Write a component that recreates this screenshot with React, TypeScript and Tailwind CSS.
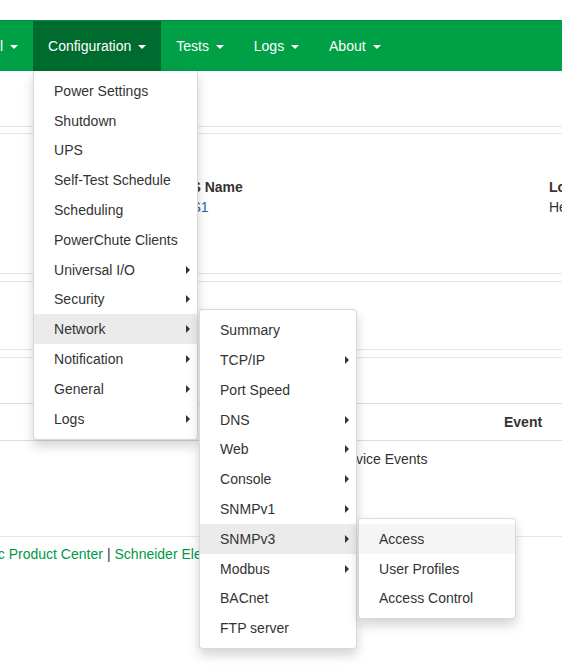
import React from 'react';

type Item = {
  label: string;
  sub?: boolean;
  state?: 'open' | 'hover';
  children?: Item[];
  left?: string;
  top?: string;
};

// Triangle under the nav labels
const Caret = () => (
  <span className="ml-[3px] inline-block h-0 w-0 border-x-[4px] border-t-[4px] border-x-transparent border-t-white align-middle" />
);

// Triangle for items that open a submenu
const SubCaret = () => (
  <span className="inline-block h-0 w-0 border-y-[4px] border-l-[4px] border-y-transparent border-l-[#333]" />
);

const snmpv3: Item[] = [
  { label: 'Access', state: 'hover' },
  { label: 'User Profiles' },
  { label: 'Access Control' },
];

const network: Item[] = [
  { label: 'Summary' },
  { label: 'TCP/IP', sub: true },
  { label: 'Port Speed' },
  { label: 'DNS', sub: true },
  { label: 'Web', sub: true },
  { label: 'Console', sub: true },
  { label: 'SNMPv1', sub: true },
  { label: 'SNMPv3', sub: true, state: 'open', children: snmpv3, left: 'left-[158px]', top: 'top-[-6px]' },
  { label: 'Modbus', sub: true },
  { label: 'BACnet' },
  { label: 'FTP server' },
];

const configuration: Item[] = [
  { label: 'Power Settings' },
  { label: 'Shutdown' },
  { label: 'UPS' },
  { label: 'Self-Test Schedule' },
  { label: 'Scheduling' },
  { label: 'PowerChute Clients' },
  { label: 'Universal I/O', sub: true },
  { label: 'Security', sub: true },
  { label: 'Network', sub: true, state: 'open', children: network, left: 'left-[165px]', top: 'top-[-5px]' },
  { label: 'Notification', sub: true },
  { label: 'General', sub: true },
  { label: 'Logs', sub: true },
];

function MenuItem({ item }: { item: Item }) {
  const bg =
    item.state === 'open' ? 'bg-[#ebebeb]' : item.state === 'hover' ? 'bg-[#f5f5f5]' : 'bg-transparent';
  return (
    <li className={`relative flex h-[29.8px] items-center justify-between pl-[20px] pr-[7px] ${bg}`}>
      <span className="whitespace-nowrap">{item.label}</span>
      {item.sub && <SubCaret />}
      {item.children && (
        <ul
          className={`absolute ${item.left} ${item.top} w-[158px] rounded-[4px] border border-[rgba(0,0,0,0.15)] bg-white py-[5px] shadow-[0_6px_12px_rgba(0,0,0,0.175)]`}
        >
          {item.children.map(c => (
            <MenuItem key={c.label} item={c} />
          ))}
        </ul>
      )}
    </li>
  );
}

const navItems = ['Control', 'Configuration', 'Tests', 'Logs', 'About'];

export default function App() {
  return (
    <div className="relative h-[670px] w-[562px] overflow-hidden bg-white font-['Liberation_Sans',Arial,sans-serif] text-[14px] leading-[20px] text-[#333]">
      <div className="h-[20px]" />

      {/* Top navigation */}
      <nav className="relative z-10 h-[51px] border-t border-[#008f3f] bg-[#00a046]">
        <ul className="-ml-[57px] flex">
          {navItems.map(label => {
            const active = label === 'Configuration';
            return (
              <li
                key={label}
                className={`relative whitespace-nowrap px-[15px] py-[15px] text-white ${active ? 'bg-[#006b2f]' : ''}`}
              >
                {label} <Caret />
                {active && (
                  <ul className="absolute left-0 top-full w-[165px] rounded-b-[4px] border border-t-0 border-[rgba(0,0,0,0.15)] bg-white py-[5px] text-[#333] shadow-[0_6px_12px_rgba(0,0,0,0.175)]">
                    {configuration.map(item => (
                      <MenuItem key={item.label} item={item} />
                    ))}
                  </ul>
                )}
              </li>
            );
          })}
        </ul>
      </nav>

      {/* Page content under the menus */}
      <div className="h-[55px]" />
      <div className="h-[7px] border-t border-[#e6e6e6]" />
      <section className="h-[141px] border-y border-[#e6e6e6] pt-[43px]">
        <div className="flex whitespace-nowrap">
          <div className="w-[549px] shrink-0 pl-[172px]">
            <div className="font-bold">UPS Name</div>
            <div className="text-[#2a64a8]">UPS1</div>
          </div>
          <div>
            <div className="font-bold">Location</div>
            <div>Headquarters</div>
          </div>
        </div>
      </section>
      <div className="h-[7px]" />
      <section className="h-[69px] border-y border-[#e6e6e6]" />
      <div className="h-[7px]" />
      <section className="border-t border-[#e6e6e6]">
        <div className="h-[45px]" />
        <div className="flex h-[38px] items-center border-y border-[#dddddd] font-bold">
          <div className="w-[504px]" />
          <div>Event</div>
        </div>
        <div className="flex h-[35px] items-center">
          <div className="w-[338px]" />
          <div className="whitespace-nowrap">Device Events</div>
        </div>
        <div className="h-[60px]" />
      </section>
      <footer className="border-t border-[#e6e6e6] pt-[7px]">
        <div className="-ml-[108px] flex whitespace-nowrap text-[#00984a]">
          <span>Schneider Electric Product Center</span>
          <span className="mx-[4px] text-[#333]">|</span>
          <span>Schneider Electric Downloads</span>
        </div>
      </footer>
    </div>
  );
}
